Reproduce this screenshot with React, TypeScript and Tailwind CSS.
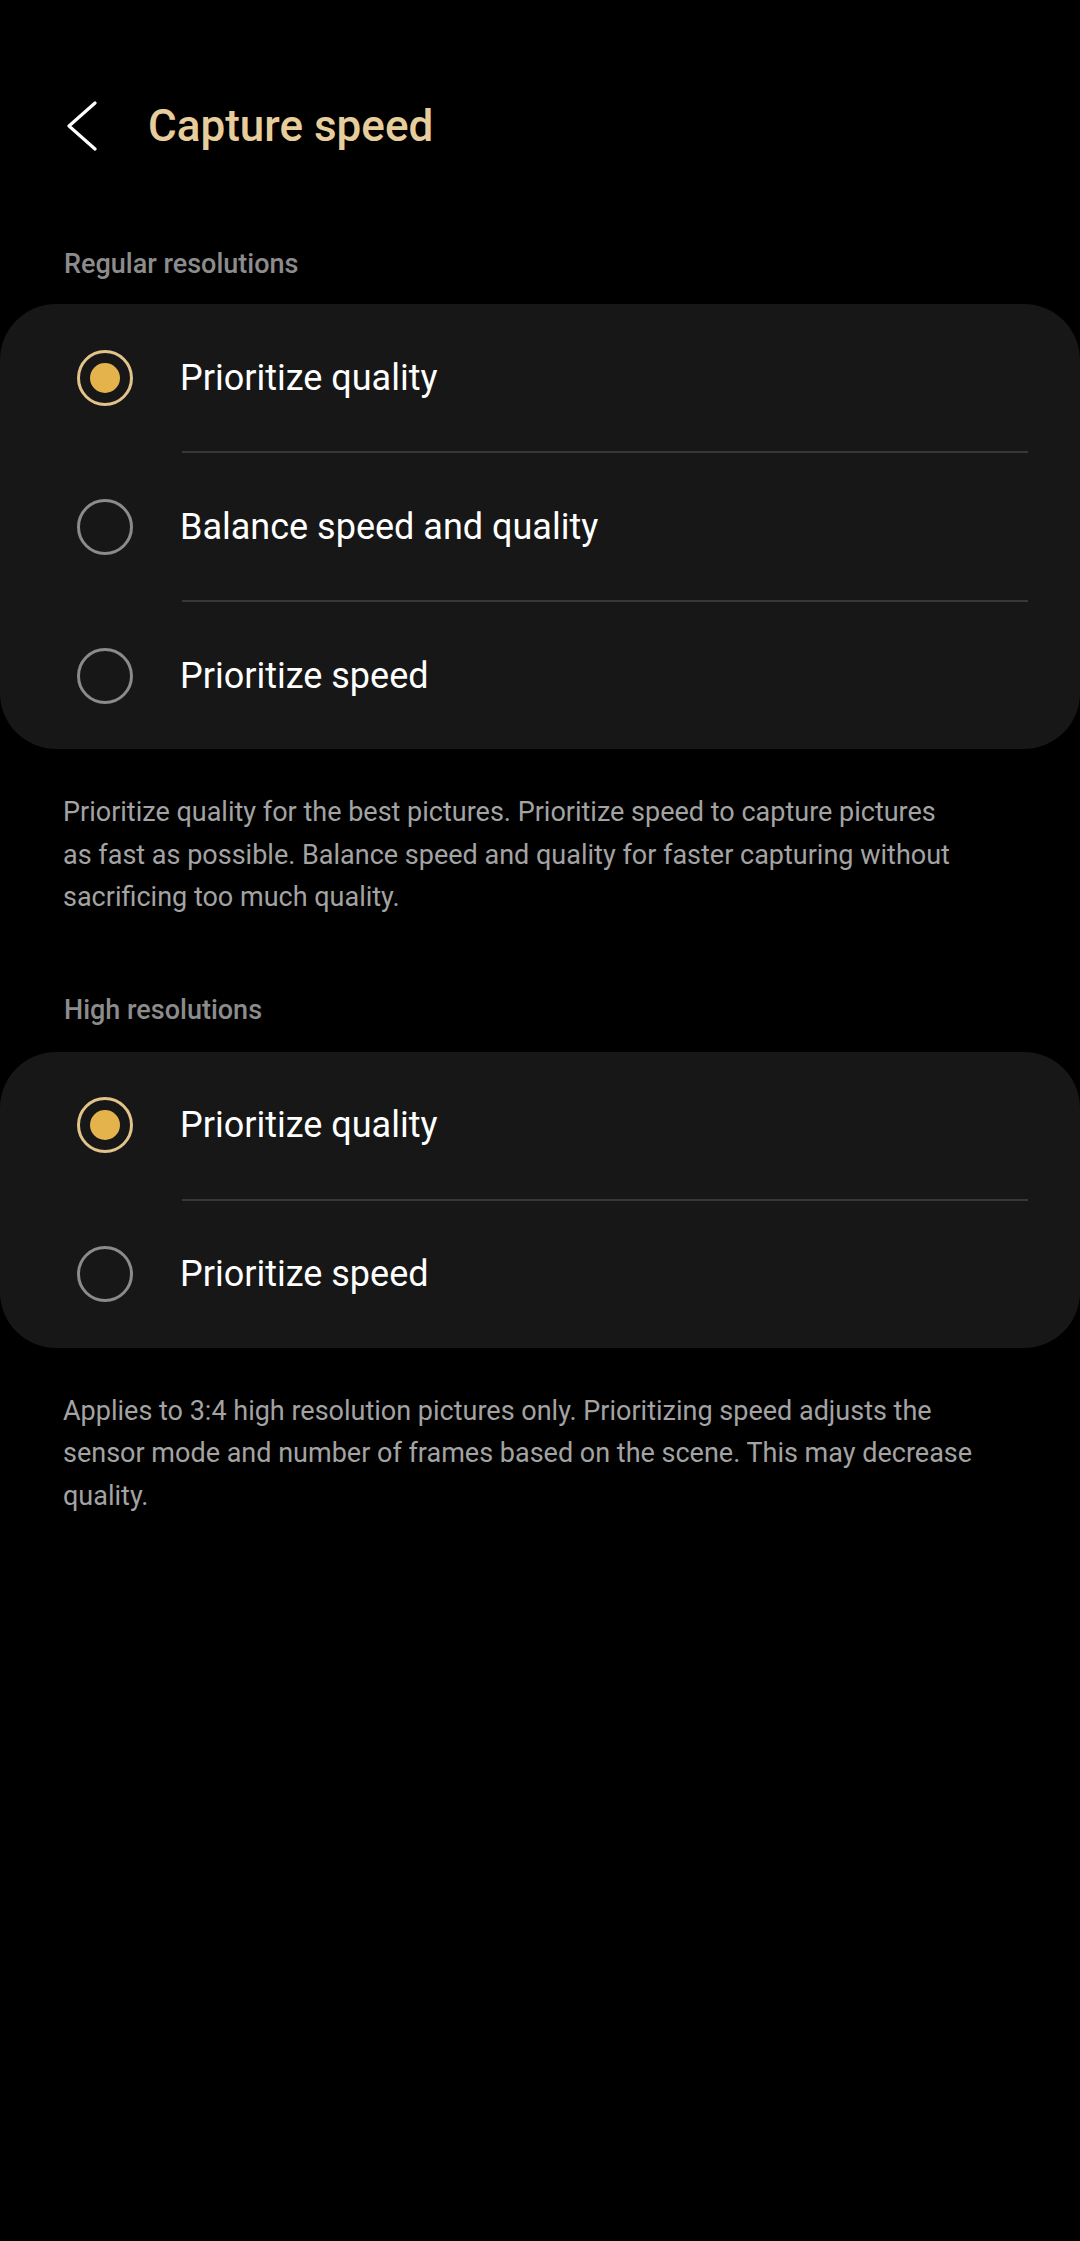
import React from "react";

type Option = { label: string; checked?: boolean };

const regular: Option[] = [
  { label: "Prioritize quality", checked: true },
  { label: "Balance speed and quality" },
  { label: "Prioritize speed" },
];

const high: Option[] = [
  { label: "Prioritize quality", checked: true },
  { label: "Prioritize speed" },
];

function Radio({ checked }: { checked?: boolean }) {
  if (checked) {
    return (
      <div className="flex h-[56px] w-[56px] items-center justify-center rounded-full border-[3px] border-[#e2c48a]">
        <div className="h-[30px] w-[30px] rounded-full bg-[#e4b34c]" />
      </div>
    );
  }
  return <div className="h-[56px] w-[56px] rounded-full border-[3px] border-[#8b8b8b]" />;
}

function OptionCard({ options }: { options: Option[] }) {
  return (
    <div className="rounded-[56px] bg-[#171717]">
      {options.map((opt, i) => (
        <div key={i}>
          {i > 0 && <div className="ml-[182px] mr-[52px] h-[2px] bg-[#383838]" />}
          <div className="flex h-[147px] items-center">
            <div className="ml-[77px] mr-[47px]">
              <Radio checked={opt.checked} />
            </div>
            <span className="text-[36px] leading-[42px] text-white">{opt.label}</span>
          </div>
        </div>
      ))}
    </div>
  );
}

function SectionLabel({ children }: { children: React.ReactNode }) {
  return <div className="px-[64px] text-[27px] leading-[32px] font-medium text-[#8c8c8c]">{children}</div>;
}

function Description({ children }: { children: React.ReactNode }) {
  return (
    <p className="pl-[63px] pr-[40px] text-[27px] leading-[42.5px] text-[#a3a3a3]">{children}</p>
  );
}

export default function App() {
  return (
    <div
      className="min-h-[2241px] w-[1080px] bg-black pt-[86px]"
      style={{ fontFamily: "Roboto, 'Noto Sans', sans-serif" }}
    >
      {/* header */}
      <div className="flex h-[80px] items-center">
        <svg className="ml-[66px]" width="32" height="50" viewBox="0 0 32 50" fill="none">
          <path d="M29 2 L3 25 L29 48" stroke="white" strokeWidth="3.2" strokeLinecap="round" strokeLinejoin="round" />
        </svg>
        <h1 className="ml-[50px] text-[44px] font-medium text-[#e8cd9c] leading-[50px]">Capture speed</h1>
      </div>

      <div className="mt-[82px]">
        <SectionLabel>Regular resolutions</SectionLabel>
      </div>
      <div className="mt-[24px]">
        <OptionCard options={regular} />
      </div>
      <div className="mt-[42px]">
        <Description>
          Prioritize quality for the best pictures. Prioritize speed to capture pictures
          <br />
          as fast as possible. Balance speed and quality for faster capturing without
          <br />
          sacrificing too much quality.
        </Description>
      </div>

      <div className="mt-[75px]">
        <SectionLabel>High resolutions</SectionLabel>
      </div>
      <div className="mt-[26px]">
        <OptionCard options={high} />
      </div>
      <div className="mt-[42px]">
        <Description>
          Applies to 3:4 high resolution pictures only. Prioritizing speed adjusts the
          <br />
          sensor mode and number of frames based on the scene. This may decrease
          <br />
          quality.
        </Description>
      </div>
    </div>
  );
}
